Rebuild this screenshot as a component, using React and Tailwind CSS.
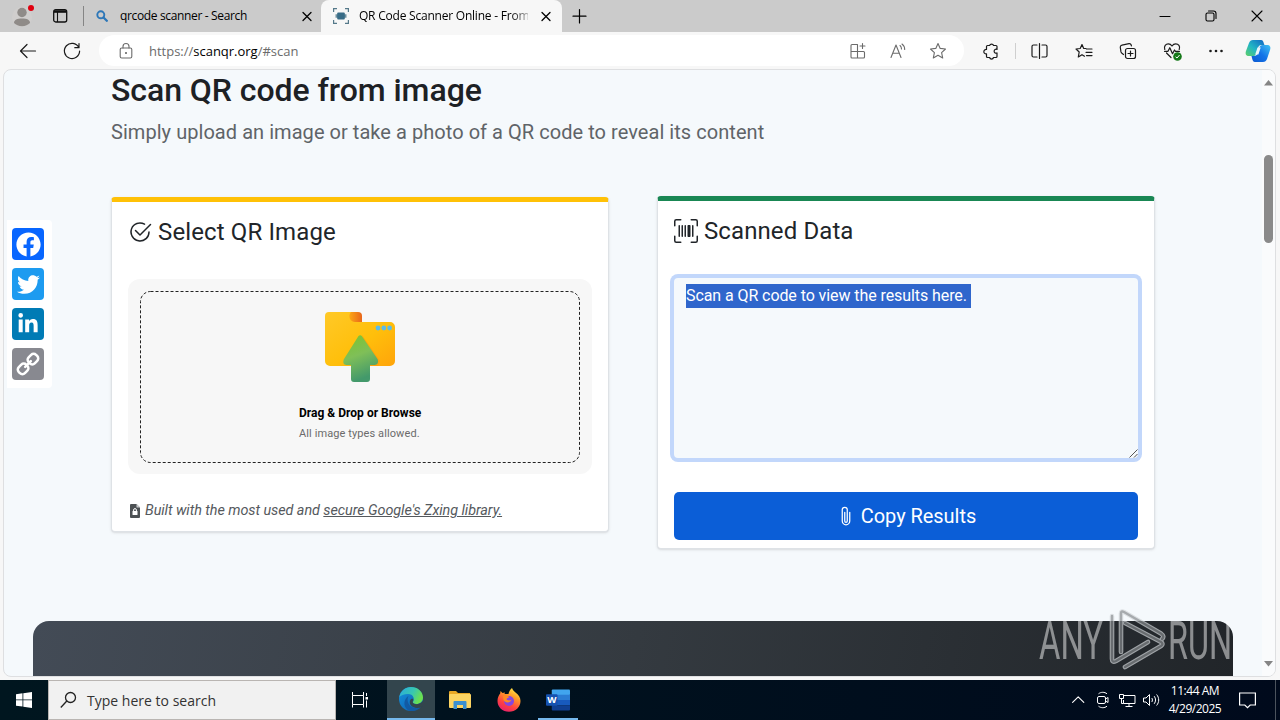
import React from 'react';
import { BsCheck2Circle, BsUpcScan, BsPaperclip } from 'react-icons/bs';
import { FaFacebook, FaTwitter, FaLinkedinIn } from 'react-icons/fa';

/* ---------- small helpers ---------- */

// Thin stroked icon, 20x20 grid
const Line = ({ size = 20, width = 1.1, className = '', children }) => (
  <svg
    width={size}
    height={size}
    viewBox="0 0 20 20"
    fill="none"
    stroke="currentColor"
    strokeWidth={width}
    strokeLinecap="round"
    strokeLinejoin="round"
    className={`shrink-0 ${className}`}
  >
    {children}
  </svg>
);

const STAR = 'M10 2.5 L12.2 7.4 L17.5 8 L13.6 11.6 L14.7 17 L10 14.3 L5.3 17 L6.4 11.6 L2.5 8 L7.8 7.4 Z';

const CloseX = () => (
  <Line size={20} width={1.3}>
    <path d="M6 6.500l8 8M14 6.500l-8 8" />
  </Line>
);

/* ---------- browser chrome ---------- */

const TabBar = () => (
  <div className="flex h-8 bg-[#cbcbcb] text-black text-[12px]">
    <div className="flex w-[83px] items-center">
      <div className="relative ml-[12px] h-5 w-5">
        <svg width="20" height="20" viewBox="0 0 20 20" className="mt-px">
          <circle cx="10" cy="10" r="10" fill="#d0cecd" />
          <circle cx="10" cy="5.5" r="4.7" fill="#8f8b88" />
          <path d="M2 16c0-3 3-4.400 8-4.400s8 1.400 8 4.400c-2 2-4.500 3.200-8 3.200s-6-1.200-8-3.200z" fill="#8f8b88" />
        </svg>
        <span className="absolute -top-px left-[16px] h-[6px] w-[6px] rounded-full bg-[#e0000f]" />
      </div>
      <svg width="15" height="14" viewBox="0 0 15 14" className="ml-[21px]" fill="none" stroke="#111">
        <rect x="0.7" y="0.7" width="13" height="12.300" rx="2" strokeWidth="1.300" />
        <path d="M1 2.500h12.500" strokeWidth="2.600" />
        <path d="M4.500 3v10" strokeWidth="1.100" />
      </svg>
    </div>
    <div className="mt-[6px] h-5 w-px bg-[#858585]" />

    <div className="flex w-[237px] items-center">
      <svg width="12" height="12" viewBox="0 0 12 12" className="ml-[12px]" fill="none" stroke="#2d77b8">
        <circle cx="4.800" cy="4.800" r="3.500" strokeWidth="1.900" />
        <path d="M7.500 7.500l3.300 3.300" strokeWidth="2.300" strokeLinecap="round" />
      </svg>
      <span className="ml-[12px] w-[177px] whitespace-nowrap tracking-[-0.35px]">qrcode scanner - Search</span>
      <CloseX />
    </div>

    <div className="flex w-[241px] items-center rounded-t-lg bg-[#f7f7f7]">
      <svg width="16" height="16" viewBox="0 0 16 16" className="ml-[12px]" fill="none" stroke="#55798a" strokeWidth="1.200">
        <path d="M.6 4V.6H4M12 .6h3.400V4M15.400 12v3.400H12M4 15.400H.6V12" />
        <path d="M2.500 8h11" stroke="#70919f" strokeWidth="3.500" />
        <rect x="4.200" y="4.500" width="7.600" height="7" rx="1" fill="#386c87" stroke="none" />
      </svg>
      <span className="ml-[10px] w-[169px] whitespace-nowrap tracking-[-0.22px] [mask-image:linear-gradient(to_right,black_90%,#0004)]">
        QR Code Scanner Online - From
      </span>
      <span className="ml-[8px] flex">
        <CloseX />
      </span>
    </div>

    <Line size={20} width={1.2} className="mt-[6px] ml-[7px]">
      <path d="M10.500 3.500v13.500M4 10.200h13" />
    </Line>

    <div className="ml-auto flex">
      <span className="flex w-[46px] items-center justify-center">
        <Line size={20} width={1.1}><path d="M5 10.500h10" /></Line>
      </span>
      <span className="flex w-[46px] items-center justify-center">
        <Line size={20} width={1.1}>
          <rect x="5" y="7" width="8" height="8" rx="1.500" />
          <path d="M7.500 5h5a2.500 2.500 0 0 1 2.500 2.500v5" />
        </Line>
      </span>
      <span className="flex w-[46px] items-center justify-center">
        <Line size={20} width={1.1}><path d="M5 5l10 10M15 5L5 15" /></Line>
      </span>
    </div>
  </div>
);

const CopilotLogo = () => (
  <svg width="26" height="24" viewBox="0 0 26 24" className="shrink-0">
    <defs>
      <linearGradient id="cpa" x1="0" y1="1" x2="1" y2="0">
        <stop offset="0" stopColor="#5fd068" />
        <stop offset=".45" stopColor="#22b6c4" />
        <stop offset="1" stopColor="#1264c4" />
      </linearGradient>
      <linearGradient id="cpb" x1="0" y1="1" x2="1" y2="0">
        <stop offset="0" stopColor="#0c58d0" />
        <stop offset=".5" stopColor="#1474e8" />
        <stop offset="1" stopColor="#42c3f2" />
      </linearGradient>
    </defs>
    <path d="M8 1h8c2 0 2.500 2 3 4l.5 1h-3c-2 0-3 1-3.500 3l-2 6c-.5 1.500-1.500 2-3 2H4c-3 0-4-2-3-5l3-8c.8-2 2-3 4-3z" fill="url(#cpa)" />
    <path d="M18 23h-8c-2 0-2.500-2-3-4l-.5-2H9c2 0 3-1 3.500-2.500l2-6C15 7 16 6 17.500 6H22c3 0 4 2 3 5l-3 9c-.8 2-2 3-4 3z" fill="url(#cpb)" />
    <path d="M12.500 8.500h3.200l-2.300 7h-3.200z" fill="#e9f5fb" />
  </svg>
);

const Toolbar = () => (
  <div className="flex h-[37px] items-center bg-[#f7f7f7] text-[#1b1b1b]">
    <Line size={20} width={1.2} className="ml-[18px]">
      <path d="M17.500 10H2.500M9 3.500L2.500 10L9 16.500" />
    </Line>
    <Line size={20} width={1.2} className="ml-[24px]">
      <path d="M16.800 6.500A7.600 7.600 0 1 0 17.600 10M17 2.500v4.200h-4.200" />
    </Line>

    <div className="ml-[17px] flex h-[31px] w-[865px] items-center rounded-full bg-white text-[#6b6b6b]">
      <Line size={20} width={1.1} className="ml-[17px]">
        <rect x="4.200" y="7" width="11.600" height="10" rx="1.500" />
        <path d="M7 7V5.500a3 3 0 0 1 6 0V7" />
        <circle cx="10" cy="12" r=".5" fill="currentColor" />
      </Line>
      <span className="mt-[2px] ml-[13px] text-[13px] tracking-[-0.01px]">
        https://<span className="text-black">scanqr.org</span>/#scan
      </span>
      <div className="mr-[16px] ml-auto flex gap-[20px]">
        <Line width={1.1}>
          <path d="M9.500 3.500H4A1 1 0 0 0 3 4.500V16a1 1 0 0 0 1 1h11.500a1 1 0 0 0 1-1v-4.500a1 1 0 0 0-1-1H3M9.500 3.500V17M14.500 2.500v5M12 5h5" />
        </Line>
        <Line width={1.1}>
          <path d="M3 16.500L8 4l5 12.500M4.700 12.300h6.600M12 4.500c1 .8 1.500 2 1.500 3.500M14 3c1.800 1.300 2.700 3 2.700 5.500" />
        </Line>
        <Line width={1.1}>
          <path d={STAR} />
        </Line>
      </div>
    </div>

    <Line className="ml-[17px]" width={1.2}>
      <path d="M7 4.500h1.600a2.100 2.100 0 0 1 4 0H15a1 1 0 0 1 1 1V8.400a2 2 0 1 0 0 3.600v3.500a1 1 0 0 1-1 1h-2.500a2 2 0 0 1-3.900 0H6.500a1 1 0 0 1-1-1V12.800a2.200 2.200 0 1 1 0-4.300V5.500a1 1 0 0 1 1-1z" />
    </Line>
    <div className="ml-[14px] h-4 w-px bg-[#cfcfcf]" />
    <Line className="ml-[14px]" width={1.2}>
      <path d="M9.500 2.500v15M7 4H3.500A1.500 1.500 0 0 0 2 5.500v9A1.500 1.500 0 0 0 3.500 16H7M12 4h3.500A1.500 1.500 0 0 1 17 5.500v9A1.500 1.500 0 0 1 15.500 16H12" />
    </Line>
    <Line className="ml-[24px]" width={1.2}>
      <path d="M12 7.500H9.700L8 3.500L6.200 7.500L2 8l3.200 3-.9 5L8 13.700l2.500 1.500M12.500 8H18M12 11.300h6M12.500 14.600H18" />
    </Line>
    <Line className="ml-[24px]" width={1.2}>
      <rect x="7.500" y="7.500" width="10" height="10" rx="2" />
      <path d="M12.500 10v5M10 12.500h5M5.500 13.500L4.300 12.600A3 3 0 0 1 3 10.900L2.300 6.500a2 2 0 0 1 1.700-2.300l7-1.500a2 2 0 0 1 2.200 1.300l.2.800" />
    </Line>
    <div className="relative ml-[24px] h-5 w-5">
      <Line width={1.2}>
        <path d="M2.800 8.500C1.500 5 4 2.800 6.300 2.800c1.700 0 2.900 1 3.700 2.200.8-1.200 2-2.200 3.700-2.200 2.700 0 4.800 2.500 3.500 5.700M4.500 12l4.500 4.500M2.500 10.300H6l1.800-3.600 2.700 6 2-3.700 1 1.300h4" />
      </Line>
      <svg width="9" height="9" viewBox="0 0 9 9" className="absolute right-0 bottom-0">
        <circle cx="4.500" cy="4.500" r="4.300" fill="#16791a" />
        <path d="M2.600 4.800L4 6l2.600-3" stroke="#fff" fill="none" />
      </svg>
    </div>
    <svg width="20" height="20" viewBox="0 0 20 20" className="ml-[24px]" fill="#1b1b1b">
      <circle cx="4.500" cy="10" r="1.300" />
      <circle cx="10" cy="10" r="1.300" />
      <circle cx="15.500" cy="10" r="1.300" />
    </svg>
    <div className="ml-[19px]">
      <CopilotLogo />
    </div>
  </div>
);

/* ---------- page content ---------- */

const UploadFolder = () => (
  <svg width="70" height="70" viewBox="0 0 70 70">
    <defs>
      <linearGradient id="fold" x1="0" y1="0" x2="1" y2="1">
        <stop offset="0" stopColor="#ffc928" />
        <stop offset=".55" stopColor="#ffbf0b" />
        <stop offset="1" stopColor="#ffa40a" />
      </linearGradient>
      <linearGradient id="tab" x1="0" y1="0" x2="1" y2="0">
        <stop offset="0" stopColor="#ffb214" />
        <stop offset="1" stopColor="#e8661b" />
      </linearGradient>
      <linearGradient id="arrow" x1="0" y1="0" x2=".3" y2="1">
        <stop offset="0" stopColor="#7cc52b" />
        <stop offset=".5" stopColor="#7fbf58" />
        <stop offset="1" stopColor="#43996b" />
      </linearGradient>
    </defs>
    <path d="M22 0h11a4 4 0 0 1 4 4v8H22z" fill="url(#tab)" />
    <path d="M4 0h22c-2 2-2 5-1 7 1 2 3 3 5 3h35a5 5 0 0 1 5 5v34a5 5 0 0 1-5 5H5a5 5 0 0 1-5-5V4a4 4 0 0 1 4-4z" fill="url(#fold)" />
    <path d="M37 23l18 26-2 5h-8z" fill="#ff9d0a" opacity=".7" />
    <path d="M33.500 24a2 2 0 0 1 3.300 0L52.500 47c1.500 3 0 6-3 6H45v14a3 3 0 0 1-3 3H29a3 3 0 0 1-3-3V53h-4.500c-3 0-4-3-2.500-6z" fill="url(#arrow)" />
    <g fill="#5bbce8">
      <circle cx="53" cy="16" r="2.400" />
      <circle cx="58.800" cy="16" r="2.400" />
      <circle cx="64.600" cy="16" r="2.400" />
    </g>
  </svg>
);

const SelectCard = () => (
  <div className="mt-px h-[335px] w-[498px] rounded-sm border border-t-[5px] border-[#dee2e6] border-t-[#ffc107] bg-white px-[16px] shadow-sm">
    <div className="mt-[12px] flex h-9 items-center text-[24px] tracking-[0.13px] text-[#212529]">
      <BsCheck2Circle size={24} className="mr-[6px]" />
      <span>Select QR Image</span>
    </div>

    <div className="mt-[29px] h-[195px] rounded-xl bg-[#f7f7f7] p-[12px]">
      <div className="relative flex h-[172px] flex-col items-center">
        {/* evenly spaced dashes, rounded corners */}
        <svg className="absolute inset-0" width="440" height="172" fill="none">
          <rect x="0.5" y="0.5" width="439" height="171" rx="10" stroke="#222" strokeDasharray="3 2" />
        </svg>
        <div className="mt-[21px]">
          <UploadFolder />
        </div>
        <div className="mt-[21px] w-[122px] text-left whitespace-nowrap">
          <div className="text-[12px] leading-5 font-bold tracking-[0.02px] text-black">Drag &amp; Drop or Browse</div>
          <div className="mt-px text-[11px] leading-5 tracking-[0.1px] text-[#6b6b6b]">All image types allowed.</div>
        </div>
      </div>
    </div>

    <div className="mt-[24px] flex items-center text-[14.400px] leading-[22px] tracking-[-0.06px] whitespace-nowrap text-[#55595d]">
      {/* document with a folded corner and a padlock */}
      <svg width="10" height="14" viewBox="0 0 10 14" className="mt-px mr-[5px] ml-[2px]">
        <path d="M1 0h5.500L10 3.500V13a1 1 0 0 1-1 1H1a1 1 0 0 1-1-1V1a1 1 0 0 1 1-1z" fill="#4d5154" />
        <path d="M6.500 0v3.500H10" fill="#c9cbcd" />
        <path d="M3.600 7.500V6a1.400 1.400 0 0 1 2.800 0v1.500" fill="none" stroke="#fff" />
        <rect x="2.500" y="7" width="5" height="4" rx=".5" fill="#fff" />
      </svg>
      <span className="mt-[2px] italic">
        Built with the most used and <span className="underline">secure Google's Zxing library.</span>
      </span>
    </div>
  </div>
);

const ResultCard = () => (
  <div className="h-[353px] w-[498px] rounded-sm border border-t-[5px] border-[#dee2e6] border-t-[#198754] bg-white px-[16px] shadow-sm">
    <div className="mt-[12px] flex h-9 items-center text-[24px] tracking-[0.1px] text-[#212529]">
      <BsUpcScan size={24} className="mr-[6px]" />
      <span>Scanned Data</span>
    </div>

    <div className="relative mt-[29px] h-[180px] w-[464px] rounded-[4px] bg-[#f5f9fc] px-[12px] pt-[6px] ring-4 ring-[#c2d7fb]">
      <span className="inline-block h-6 w-[285px] bg-[#2f66cc] text-[16px] leading-6 tracking-[-0.08px] whitespace-nowrap text-white">
        Scan a QR code to view the results here.
      </span>
      <svg width="10" height="10" viewBox="0 0 10 10" className="absolute right-0 bottom-0" stroke="#555">
        <path d="M1.500 9.500l8-8M6 9.500l3.500-3.500" />
      </svg>
    </div>

    <button className="mt-[34px] flex h-12 w-[464px] items-center justify-center rounded-[5px] bg-[#0b5ed7] text-[20px] tracking-[-0.05px] text-white">
      <BsPaperclip size={20} className="mr-[5px]" />
      Copy Results
    </button>
  </div>
);

const ShareBar = () => (
  <div className="absolute top-[150px] left-[3px] flex flex-col gap-2 rounded-r bg-white py-[8px] pr-[8px] pl-[5px] text-white">
    <div className="flex h-8 w-8 items-center justify-center rounded bg-[#0866ff]">
      <FaFacebook size={25} />
    </div>
    <div className="flex h-8 w-8 items-center justify-center rounded bg-[#1d9bf0]">
      <FaTwitter size={23} />
    </div>
    <div className="flex h-8 w-8 items-center justify-center rounded bg-[#007bb5]">
      <FaLinkedinIn size={22} />
    </div>
    <div className="flex h-8 w-8 items-center justify-center rounded bg-[#888990]">
      <svg width="26" height="26" viewBox="0 0 26 26" fill="none" stroke="#fff" strokeWidth="2.500">
        <g transform="rotate(-45 13 13)">
          <rect x=".8" y="8.700" width="10.500" height="8.600" rx="3.500" />
          <rect x="14.700" y="8.700" width="10.500" height="8.600" rx="3.500" />
          <path d="M9 13h8" strokeLinecap="round" />
        </g>
      </svg>
    </div>
  </div>
);

const Watermark = () => (
  <svg width="204" height="66" viewBox="0 0 204 66" className="absolute top-[538px] left-[1035px]">
    <g fill="#fff" opacity=".48" fontFamily="Roboto, sans-serif" fontSize="53" fontWeight="400">
      <text x="0" y="51" textLength="64" lengthAdjust="spacingAndGlyphs">ANY</text>
      <text x="129" y="51" textLength="64" lengthAdjust="spacingAndGlyphs">RUN</text>
    </g>
    <g fill="none" strokeLinejoin="round" strokeLinecap="round" opacity=".7">
      <g stroke="#d3d7da" strokeWidth="4.600">
        <path d="M82 44V5.500q0-3 3-1.500l37 21.500q4 3 1 5.500" />
        <path d="M73 8v43q0 4 4 2L109 34" />
        <path d="M86 15l36 19q3 2 0 4L86 59" />
      </g>
      <g stroke="#85898c" strokeWidth="2.400">
        <path d="M82 44V5.500q0-3 3-1.500l37 21.500q4 3 1 5.500" />
        <path d="M73 8v43q0 4 4 2L109 34" />
        <path d="M86 15l36 19q3 2 0 4L86 59" />
      </g>
    </g>
  </svg>
);

const Page = () => (
  <div className="relative mr-[4px] ml-[3px] flex h-[608px] overflow-hidden rounded-lg border border-[#dedfe1] bg-[#f5f9fc] font-['Roboto',sans-serif]">
    <main className="w-[1258px] pl-[107px]">
      <h1 className="mt-px text-[32px] leading-[38px] font-medium tracking-[-0.05px] text-[#1d2125]">Scan QR code from image</h1>
      <p className="mt-[8px] text-[20px] leading-[30px] tracking-[0.05px] text-[#5f6468]">
        Simply upload an image or take a photo of a QR code to reveal its content
      </p>
      <div className="mt-[49px] flex items-start gap-[48px]">
        <SelectCard />
        <ResultCard />
      </div>
      <div className="mt-[72px] -ml-[78px] h-[80px] w-[1200px] rounded-t-2xl bg-[linear-gradient(100deg,#434b56,#343a40_50%,#212529)]" />
    </main>

    <div className="flex flex-1 flex-col items-center bg-[#fafbfc]">
      <svg width="9" height="6" viewBox="0 0 9 6" className="mt-[10px]"><path d="M0 5.500L4.500 0L9 5.500z" fill="#858585" /></svg>
      <div className="mt-[69px] h-[88px] w-[9px] rounded-full bg-[#8a8a8a]" />
      <svg width="9" height="6" viewBox="0 0 9 6" className="mt-auto mb-[9px]"><path d="M0 0L4.500 5.500L9 0z" fill="#858585" /></svg>
    </div>

    <ShareBar />
    <Watermark />
  </div>
);

/* ---------- taskbar ---------- */

const EdgeLogo = () => (
  <svg width="24" height="24" viewBox="0 0 24 24">
    <defs>
      <linearGradient id="ea" x1="0" y1="0" x2="1" y2=".4">
        <stop offset="0" stopColor="#2aa9df" />
        <stop offset=".6" stopColor="#38c7b0" />
        <stop offset="1" stopColor="#6be04f" />
      </linearGradient>
      <linearGradient id="eb" x1="0" y1="0" x2="1" y2="1">
        <stop offset="0" stopColor="#1592df" />
        <stop offset="1" stopColor="#0d5aa8" />
      </linearGradient>
    </defs>
    <circle cx="12" cy="12" r="12" fill="url(#eb)" />
    <path d="M.3 10C1.500 4 6.300 0 12 0c7 0 12 5 12 10.500 0 4-3 6.500-6.500 6.500-2.500 0-4-1-3.500-2 2-3 .5-8-5-8C5 7 1.500 8.500.3 10z" fill="url(#ea)" />
    <path d="M9.500 9C7 13 9.500 21.500 18 21.200c2-.1 3.500-.9 4.200-1.700-1.300 2.300-4.700 4.500-9.200 4.500C6 24 3.500 16 7 11.500 8 10 9 9.300 9.500 9z" fill="#125aa3" />
    <path d="M14.500 12.500c0 1.200-1.300 2-.6 3.200.9 1.500 3.600 2 6.600.8 1.500-.6 2.300-1.300 3.500-2.500v4c-.7 1.500-1.200 1.800-2 2.300-4.800 2-11-.5-11.200-4.800-.1-2 1-3.700 2.400-4 .8.500 1.300 1.300 1.300 2z" fill="#33454d" />
  </svg>
);

const FolderLogo = () => (
  <svg width="22" height="18" viewBox="0 0 22 18">
    <path d="M0 1a1 1 0 0 1 1-1h6l2 2h12v4H0z" fill="#e9a825" />
    <rect y="3" width="22" height="14" rx="1" fill="#fcd462" />
    <path d="M4.500 18v-7a1 1 0 0 1 1-1h11a1 1 0 0 1 1 1v7h-3.500v-4H8v4z" fill="#3a8fd0" />
  </svg>
);

const FirefoxLogo = () => (
  <svg width="24" height="24" viewBox="0 0 24 24">
    <defs>
      <linearGradient id="ff" x1=".8" y1="0" x2=".3" y2="1">
        <stop offset="0" stopColor="#fff04a" />
        <stop offset=".35" stopColor="#ff9a28" />
        <stop offset=".7" stopColor="#ff4240" />
        <stop offset="1" stopColor="#e8206c" />
      </linearGradient>
    </defs>
    <path d="M15 0c.5 2 2 3 3.500 4.500C21.500 6.500 23.500 9.500 23.500 13c0 6-5 10.800-11.500 10.800S.5 19 .5 13c0-3 1-5.500 2.700-7.500L3.500 3l2 2L8 4.500 7.500 6h4C12 3.500 13 1.500 15 0z" fill="url(#ff)" />
    <circle cx="12" cy="13" r="5" fill="#8546e0" />
    <path d="M6 8c2-1 5-.5 6.500 1.500-1.500 0-2.500.6-3 1.500 1 2 4 1.500 5 .5-.5 3.500-6.500 4-8 .5z" fill="#ff8a22" />
  </svg>
);

const WordLogo = () => (
  <svg width="24" height="22" viewBox="0 0 25 22" className="mt-[2px]">
    <rect x="6" width="19" height="6" rx="1" fill="#41a5ee" />
    <rect x="6" y="5.500" width="19" height="5.500" fill="#2b7cd3" />
    <rect x="6" y="11" width="19" height="5.500" fill="#185abd" />
    <path d="M6 16.500h19V21a1 1 0 0 1-1 1H7a1 1 0 0 1-1-1z" fill="#103f91" />
    <rect y="5" width="12" height="12" rx="1" fill="#1652b0" />
    <text x="6" y="14.500" fill="#fff" fontSize="10" fontWeight="700" textAnchor="middle" fontFamily="Open Sans, sans-serif">W</text>
  </svg>
);

const Taskbar = () => (
  <div className="flex h-10 bg-linear-to-r from-[#00161f] to-[#000a1c] text-white">
    <div className="flex w-12 items-center justify-center">
      <svg width="16" height="16" viewBox="0 0 16 16" fill="#fff">
        <path d="M0 2.200L6.500 1.300V7.500H0zM7.300 1.200L16 0v7.500H7.300zM0 8.300h6.500v6.300L0 13.700zM7.300 8.300H16V16l-8.700-1.200z" />
      </svg>
    </div>
    <div className="flex w-[288px] items-center border border-[#b9b5b2] bg-[#f1f1f1] text-[#333]">
      <svg width="18" height="18" viewBox="0 0 18 18" className="ml-[11px]" fill="none" stroke="#222" strokeWidth="1.300">
        <circle cx="10.500" cy="6.500" r="5" />
        <path d="M6.800 10L.8 16.500" />
      </svg>
      <span className="ml-[9px] text-[14px] tracking-[0.01px]">Type here to search</span>
    </div>

    <div className="flex w-[51px] items-center justify-center">
      <svg width="17" height="16" viewBox="0 0 17 16" className="mr-[2px]" fill="none" stroke="#fff">
        <path d="M.5 0v3.500h11V0M.5 15.500v-3h11v3M.5 3.500v9M11.500 3.500v9M14.500 1v3M14.500 8.500v7" />
        <rect x="13.500" y="5" width="2.500" height="2.500" fill="#fff" stroke="none" />
      </svg>
    </div>
    <div className="flex w-12 items-center justify-center border-b-2 border-[#76b9ed] bg-[#33454d]">
      <EdgeLogo />
    </div>
    <div className="flex w-[50px] items-center justify-center">
      <FolderLogo />
    </div>
    <div className="flex w-12 items-center justify-center">
      <FirefoxLogo />
    </div>
    <div className="ml-[5px] flex w-10 items-center justify-center border-b-2 border-[#76b9ed]">
      <WordLogo />
    </div>

    <div className="ml-auto flex items-center">
      <Line size={16} width={1.4}><path d="M4.500 13l7-7 7 7" /></Line>
      <svg width="16" height="18" viewBox="0 0 16 18" className="ml-[10px]" fill="none" stroke="#fff">
        <rect x="2.500" y="5.500" width="8" height="7" rx="1.500" />
        <path d="M10.500 8l2.500-1.500v5L10.500 10M3.500 2.800c2.500-2 6-2 8.500 0M3.500 15.200c2.500 2 6 2 8.500 0" />
      </svg>
      <svg width="17" height="15" viewBox="0 0 17 15" className="ml-[8px]" fill="none" stroke="#fff">
        <path d="M5 2.500h11v8H4.500V7M10 10.500v3M6.500 13.500h7" />
        <path d="M.5 1.500h4v4h-4zM2.500 5.500v5h2" />
      </svg>
      <svg width="18" height="14" viewBox="0 0 18 14" className="ml-[7px]" fill="none" stroke="#fff">
        <path d="M.5 5h2.500L6.500 1.500v11L3 9H.5zM8.800 5c.8 1.200.8 2.800 0 4M11.200 3.200c1.800 2.300 1.800 5.300 0 7.600M13.600 1.500c2.800 3.300 2.800 7.700 0 11" />
      </svg>
      <div className="ml-[4px] w-[60px] text-center text-[12px] leading-[18px] tracking-[-0.48px] whitespace-nowrap">
        <div>11:44 AM</div>
        <div>4/29/2025</div>
      </div>
      <svg width="17" height="17" viewBox="0 0 17 17" className="ml-[14px]" fill="none" stroke="#fff" strokeWidth="1.200">
        <path d="M.6 1h15.800v12h-5.200L8.500 15.700 5.800 13H.6z" />
      </svg>
      <div className="mr-[4px] ml-[19px] h-10 w-px bg-[#4b535d]" />
    </div>
  </div>
);

const App = () => (
  <div className="flex h-[720px] w-[1280px] flex-col overflow-hidden bg-[#f7f7f7] font-['Open_Sans',sans-serif]">
    <TabBar />
    <Toolbar />
    <Page />
    <div className="mt-auto">
      <Taskbar />
    </div>
  </div>
);

export default App;
